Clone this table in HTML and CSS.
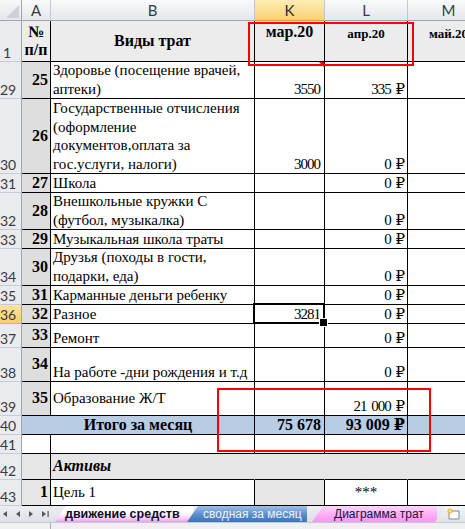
FILE: index.html
```html
<!DOCTYPE html>
<html lang="ru">
<head>
<meta charset="utf-8">
<title>движение средств</title>
<link rel="stylesheet" href="styles.css">
</head>
<body>
<div class="app">
  <div class="sheet">
    <div class="grid">
      <!-- column headers -->
      <div class="corner"><span class="tri"></span></div>
      <div class="ch">A</div>
      <div class="ch">B</div>
      <div class="ch ch-sel">K</div>
      <div class="ch">L</div>
      <div class="ch">M</div>

      <!-- row 1 -->
      <div class="rh"><span>1</span></div>
      <div class="c hdr mid ctr bold">№<br>п/п</div>
      <div class="c hdr mid ctr bold">Виды трат</div>
      <div class="c hdr top ctr bold mon-lg">мар.20</div>
      <div class="c hdr top ctr bold mon-sm">апр.20</div>
      <div class="c hdr top ctr bold mon-sm">май.20</div>

      <!-- 29 -->
      <div class="rh"><span>29</span></div>
      <div class="c acol mid rt bold">25</div>
      <div class="c txt">Здоровье (посещение врачей,<br>аптеки)</div>
      <div class="c num-k comment">3550</div>
      <div class="c num-l">335 ₽</div>
      <div class="c"></div>

      <!-- 30 -->
      <div class="rh"><span>30</span></div>
      <div class="c acol mid rt bold">26</div>
      <div class="c txt">Государственные отчисления<br>(оформление<br>документов,оплата за<br>гос.услуги, налоги)</div>
      <div class="c num-k">3000</div>
      <div class="c num-l">0 ₽</div>
      <div class="c"></div>

      <!-- 31 -->
      <div class="rh"><span>31</span></div>
      <div class="c acol mid rt bold">27</div>
      <div class="c txt">Школа</div>
      <div class="c num-k"></div>
      <div class="c num-l">0 ₽</div>
      <div class="c"></div>

      <!-- 32 -->
      <div class="rh"><span>32</span></div>
      <div class="c acol mid rt bold">28</div>
      <div class="c txt">Внешкольные кружки С<br>(футбол, музыкалка)</div>
      <div class="c num-k"></div>
      <div class="c num-l">0 ₽</div>
      <div class="c"></div>

      <!-- 33 -->
      <div class="rh"><span>33</span></div>
      <div class="c acol mid rt bold">29</div>
      <div class="c txt">Музыкальная школа траты</div>
      <div class="c num-k"></div>
      <div class="c num-l">0 ₽</div>
      <div class="c"></div>

      <!-- 34 -->
      <div class="rh"><span>34</span></div>
      <div class="c acol mid rt bold">30</div>
      <div class="c txt">Друзья (походы в гости,<br>подарки, еда)</div>
      <div class="c num-k"></div>
      <div class="c num-l">0 ₽</div>
      <div class="c"></div>

      <!-- 35 -->
      <div class="rh"><span>35</span></div>
      <div class="c acol mid rt bold">31</div>
      <div class="c txt">Карманные деньги ребенку</div>
      <div class="c num-k"></div>
      <div class="c num-l">0 ₽</div>
      <div class="c"></div>

      <!-- 36 -->
      <div class="rh rh-sel"><span>36</span></div>
      <div class="c acol mid rt bold">32</div>
      <div class="c txt">Разное</div>
      <div class="c num-k selected">3281</div>
      <div class="c num-l">0 ₽</div>
      <div class="c"></div>

      <!-- 37 -->
      <div class="rh"><span>37</span></div>
      <div class="c acol mid rt bold">33</div>
      <div class="c txt">Ремонт</div>
      <div class="c num-k"></div>
      <div class="c num-l">0 ₽</div>
      <div class="c"></div>

      <!-- 38 -->
      <div class="rh"><span>38</span></div>
      <div class="c acol mid rt bold">34</div>
      <div class="c txt">На работе -дни рождения и т.д</div>
      <div class="c num-k"></div>
      <div class="c num-l">0 ₽</div>
      <div class="c"></div>

      <!-- 39 -->
      <div class="rh"><span>39</span></div>
      <div class="c acol mid rt bold">35</div>
      <div class="c txt mid">Образование Ж/Т</div>
      <div class="c num-k"></div>
      <div class="c num-l">21 000 ₽</div>
      <div class="c"></div>

      <!-- 40 -->
      <div class="rh"><span>40</span></div>
      <div class="c total span2 mid ctr bold">Итого за месяц</div>
      <div class="c total num-k tot-num bold">75 678</div>
      <div class="c total num-l tot-num bold">93 009 ₽</div>
      <div class="c total"></div>

      <!-- 41 -->
      <div class="rh"><span>41</span></div>
      <div class="c"></div>
      <div class="c"></div>
      <div class="c"></div>
      <div class="c"></div>
      <div class="c"></div>

      <!-- 42 -->
      <div class="rh"><span>42</span></div>
      <div class="c grey"></div>
      <div class="c grey nob txt-b mid bold italic">Активы</div>
      <div class="c grey nob"></div>
      <div class="c grey nob"></div>
      <div class="c grey nob"></div>

      <!-- 43 -->
      <div class="rh"><span>43</span></div>
      <div class="c acol2 mid rt bold">1</div>
      <div class="c txt mid">Цель 1</div>
      <div class="c acol2"></div>
      <div class="c mid ctr stars">***</div>
      <div class="c"></div>
    </div>

    <div class="mark mark-head"></div>
    <div class="mark mark-total"></div>
  </div>

  <div class="tabbar">
    <div class="nav">
      <svg width="55" height="16" viewBox="0 0 55 16">
        <path d="M7 5 L3 8 L7 11 Z" fill="#555"/>
        <path d="M20 5 L16 8 L20 11 Z" fill="#555"/>
        <path d="M29 5 L33 8 L29 11 Z" fill="#555"/>
        <path d="M42 5 L46 8 L42 11 Z" fill="#555"/>
        <rect x="47.5" y="5" width="1.2" height="6" fill="#555"/>
      </svg>
    </div>
    <div class="tab tab-active">движение средств</div>
    <div class="tab tab-blue">сводная за месяц</div>
    <div class="tab tab-pink">Диаграмма трат</div>
    <div class="tab tab-new">
      <svg width="20" height="14" viewBox="0 0 20 14">
        <path d="M6 4 H16 V12 H6 Z" fill="#fff" stroke="#7d8896" stroke-width="1"/>
        <circle cx="7" cy="4" r="2.6" fill="#f6b73c"/>
        <circle cx="7" cy="4" r="1.2" fill="#fde9a6"/>
      </svg>
    </div>
  </div>
  <div class="statusbar"><div class="sb-left"></div></div>
</div>
</body>
</html>
```

FILE: styles.css
```css
* {
  box-sizing: border-box;
  margin: 0;
  padding: 0;
}

html, body {
  width: 465px;
  height: 529px;
  overflow: hidden;
  background: #fff;
}

body {
  font-family: "Liberation Serif", "Times New Roman", "DejaVu Serif", serif;
  color: #000;
}

.app {
  width: 465px;
  height: 529px;
  display: flex;
  flex-direction: column;
  overflow: hidden;
}

.sheet {
  position: relative;
  width: 465px;
  height: 506px;
  flex: none;
  overflow: hidden;
}

.grid {
  display: grid;
  width: 490px;
  grid-template-columns: 22px 29px 204px 70px 83px 82px;
  grid-template-rows: 21px 41px 37px 75px 19px 37px 19px 37px 19px 19px 24px 34px 34px 19px 19px 26px 26px;
}

.grid > div {
  display: flex;
  flex-direction: column;
  min-width: 0;
  overflow: hidden;
  white-space: nowrap;
}

/* header cells */
.corner {
  position: relative;
  background: linear-gradient(#f7f8fa, #e4e7eb);
  border-right: 1px solid #9ea5ae;
  border-bottom: 1px solid #9ea5ae;
}

.corner .tri {
  position: absolute;
  right: 2px;
  bottom: 2px;
  width: 0;
  height: 0;
  border-left: 13px solid transparent;
  border-bottom: 13px solid #cdd1d6;
}

.ch {
  background: linear-gradient(#f9fafb, #e4e7eb);
  border-right: 1px solid #c3c8ce;
  border-bottom: 1px solid #9ea5ae;
  font-family: Lato, "Open Sans", sans-serif;
  font-size: 15px;
  color: #363b42;
  align-items: center;
  justify-content: center;
  line-height: 18px;
}

.ch-sel {
  background: linear-gradient(#fdedb6, #f8d16f);
  border-bottom: 1px solid #e89b3c;
  color: #2d2d2d;
}

.grid > .rh {
  background: #e9ebee;
  border-right: 1px solid #9ea5ae;
  border-bottom: 1px solid #c9cdd2;
  font-family: Lato, "Open Sans", sans-serif;
  font-size: 14px;
  color: #363b42;
  line-height: 17px;
  align-items: flex-start;
  justify-content: flex-end;
  overflow: visible;
}

.rh span {
  display: block;
  width: 14px;
  text-align: center;
}

.grid > .rh-sel {
  background: linear-gradient(#fbe3a0, #f6cf6e);
  border-bottom-color: #e3b253;
}

/* ordinary cells */
.c {
  border-right: 1px solid #000;
  border-bottom: 1px solid #000;
  font-size: 16px;
  line-height: 18.4px;
  justify-content: flex-end;
  padding: 0 2px;
}

.hdr { background: #ececec; }
.acol { background: #dedede; }
.acol2 { background: #e6e6e6; }
.grey { background: #e6e6e6; }
.total { background: #b8cce4; }
.nob { border-right-color: transparent; }

.span2 { grid-column: span 2; }

.top { justify-content: flex-start; padding-top: 2px; }
.mid { justify-content: center; }
.ctr { text-align: center; align-items: center; }
.rt { text-align: right; align-items: flex-end; }

.txt {
  padding-left: 2px;
  font-size: 15px;
}

.txt-b { padding-left: 2px; }

.num-k {
  align-items: flex-end;
  padding-right: 4px;
  font-size: 15px;
  letter-spacing: -1px;
  word-spacing: 2px;
}

.num-l {
  align-items: flex-end;
  padding-right: 3px;
  font-size: 15px;
  letter-spacing: -1px;
  word-spacing: 2px;
}

.tot-num {
  font-size: 16px;
  letter-spacing: 0;
  word-spacing: 0;
}

.num-k.tot-num { padding-right: 3px; }
.num-l.tot-num { padding-right: 2px; }

.bold { font-weight: bold; }
.italic { font-style: italic; }

.mon-lg { font-size: 16px; }
.mon-sm { font-size: 13px; padding-top: 4px; }

.stars { font-size: 15px; }

/* comment indicator */
.grid > .comment { position: relative; overflow: visible; }
.comment::before {
  content: "";
  position: absolute;
  right: 0;
  top: 0;
  width: 0;
  height: 0;
  border-left: 5px solid transparent;
  border-top: 5px solid #e00;
}

/* active cell */
.grid > .selected {
  position: relative;
  overflow: visible;
}

.selected::after {
  content: "";
  position: absolute;
  left: -2px;
  top: -2px;
  right: -1px;
  bottom: -1px;
  border: 2px solid #000;
  box-shadow: inset 0 0 0 1px #fff;
  z-index: 2;
}

.selected::before {
  content: "";
  position: absolute;
  right: -4px;
  bottom: -4px;
  width: 7px;
  height: 7px;
  background: #000;
  border: 1px solid #fff;
  z-index: 3;
}

/* red annotation frames */
.mark {
  position: absolute;
  border: 2px solid #f00;
  z-index: 5;
  pointer-events: none;
}

.mark-head {
  left: 248px;
  top: 22px;
  width: 166px;
  height: 44px;
}

.mark-total {
  left: 217px;
  top: 388px;
  width: 214px;
  height: 64px;
}

/* sheet tabs */
.tabbar {
  flex: none;
  height: 16px;
  display: flex;
  background: linear-gradient(#eceef1, #dde1e6);
  font-family: "Liberation Sans", Arial, sans-serif;
  font-size: 12px;
  line-height: 16px;
}

.nav {
  width: 55px;
  flex: none;
  height: 16px;
}

.nav svg { display: block; }

.tab {
  flex: none;
  height: 16px;
  white-space: nowrap;
  overflow: hidden;
  clip-path: polygon(0 100%, 11px 0, 100% 0, 100% 100%);
}

.tab-active {
  width: 138px;
  padding-left: 10px;
  font-size: 12.5px;
  font-weight: bold;
  color: #0d0d2b;
  background: linear-gradient(#ffffff 40%, #fbd3f6 75%, #f49ae9 100%);
}

.tab-blue {
  width: 120px;
  margin-left: -6px;
  padding-left: 16px;
  color: #eef4ff;
  background: linear-gradient(#9fc0e8, #5a8ccb 55%, #3f74b8);
}

.tab-pink {
  width: 125px;
  margin-left: 5px;
  padding-left: 22px;
  color: #14143a;
  background: linear-gradient(#ffd6fb, #ffa9f6 60%, #fb94ef);
}

.tab-new {
  width: 32px;
  margin-left: -2px;
  padding-left: 8px;
  padding-top: 1px;
  background: linear-gradient(#f3f5f7, #dfe3e8);
}

.tab-new svg { display: block; }

.statusbar {
  flex: none;
  height: 7px;
  background: #eef0f2;
  border-top: 1px solid #c4c9cf;
  display: flex;
}

.sb-left {
  width: 51px;
  height: 100%;
  border-right: 1px solid #a9b0b8;
}
```
